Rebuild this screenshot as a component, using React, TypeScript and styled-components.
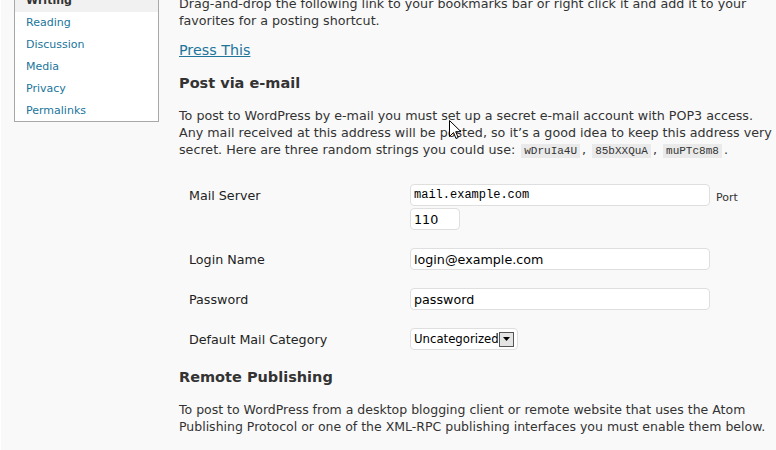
import styled, { createGlobalStyle } from 'styled-components';

const GlobalStyle = createGlobalStyle`
  html, body {
    margin: 0;
    padding: 0;
    background: #f9f9f9;
    overflow: hidden;
  }
  body {
    font-family: 'DejaVu Sans', Verdana, sans-serif;
    color: #333;
  }
`;

const Page = styled.div`
  position: relative;
  display: flex;
  align-items: flex-start;
  width: 776px;
  height: 450px;
  overflow: hidden;
  border-left: 1px solid #fff;
  box-sizing: border-box;
`;

const Sidebar = styled.ul`
  list-style: none;
  margin: -11px 0 0 13px;
  padding: 0;
  width: 143px;
  flex: none;
  background: #fff;
  border: 1px solid #a8a8a8;
`;

const SideItem = styled.li<{ $current?: boolean }>`
  height: 22px;
  line-height: 22px;
  padding-left: 11px;
  font-size: 11px;
  font-weight: ${(p) => (p.$current ? 'bold' : 'normal')};
  background: ${(p) => (p.$current ? '#f1f1f1' : 'transparent')};

  &:last-child {
    height: 21px;
  }

  a {
    color: ${(p) => (p.$current ? '#333' : '#21759b')};
    text-decoration: none;
  }
`;

const Main = styled.div`
  flex: 1;
  margin: -5px 0 0 20px;
  padding-right: 3px;
`;

const Text = styled.p<{ $gap?: number; $size?: number }>`
  margin: ${(p) => p.$gap ?? 0}px 0 0;
  font-size: ${(p) => p.$size ?? 12.7}px;
  line-height: 17px;
  color: #333;
`;

const PressLink = styled.a`
  display: inline-block;
  margin-top: 11px;
  font-size: 14.3px;
  line-height: 20px;
  color: #21759b;
  text-decoration: underline;
`;

const Heading = styled.h3<{ $gap: number }>`
  margin: ${(p) => p.$gap}px 0 0;
  font-size: 14.5px;
  line-height: 22px;
  font-weight: bold;
  color: #333;
`;

const Code = styled.code`
  font-family: 'Liberation Mono', 'Courier New', monospace;
  font-size: 11px;
  line-height: 13px;
  background: #eaeaea;
  padding: 1px 3px;
  margin: 0 2px;
`;

const FormTable = styled.div`
  display: grid;
  grid-template-columns: 231px 1fr;
  margin-top: 17px;
`;

const Label = styled.div`
  padding: 12px 10px 0;
  font-size: 12.7px;
  line-height: 17px;
  color: #222;
`;

const Field = styled.div`
  padding: 9px 0;
  display: flex;
  flex-wrap: wrap;
  align-items: center;
  column-gap: 6px;
`;

const Input = styled.input<{ $mono?: boolean; $w: number }>`
  box-sizing: border-box;
  width: ${(p) => p.$w}px;
  height: 22px;
  padding: 0 3px;
  border: 1px solid #dfdfdf;
  border-radius: 4px;
  background: #fff;
  outline: none;
  font-family: ${(p) =>
    p.$mono ? "'Liberation Mono', 'Courier New', monospace" : "'DejaVu Sans', Verdana, sans-serif"};
  font-size: ${(p) => (p.$mono ? '12px' : '12.7px')};
  color: #000;
`;

const PortLabel = styled.span`
  font-size: 11px;
  color: #333;
  padding-top: 5px;
`;

const PortRow = styled.div`
  flex-basis: 100%;
  margin-top: 2px;
`;

const Select = styled.div`
  box-sizing: border-box;
  width: 108px;
  height: 22px;
  padding: 2px 3px;
  display: flex;
  align-items: center;
  border: 1px solid #dfdfdf;
  border-radius: 4px;
  background: #fff;
  font-size: 11.7px;
  color: #000;
`;

const SelectText = styled.span`
  flex: 1;
  white-space: nowrap;
`;

const DropButton = styled.span`
  box-sizing: border-box;
  width: 16px;
  height: 15px;
  display: flex;
  align-items: center;
  justify-content: center;
  border: 1px solid #555;
  background: #e4e4e4;
`;

const Cursor = styled.svg`
  position: absolute;
  left: 448px;
  top: 120px;
`;

const App = () => {
  return (
    <>
      <GlobalStyle />
      <Page>
        <Sidebar>
          <SideItem $current>
            <a href="#">Writing</a>
          </SideItem>
          {['Reading', 'Discussion', 'Media', 'Privacy', 'Permalinks'].map((s) => (
            <SideItem key={s}>
              <a href="#">{s}</a>
            </SideItem>
          ))}
        </Sidebar>

        <Main>
          <Text>
            Drag-and-drop the following link to your bookmarks bar or right click it and add it to your
            favorites for a posting shortcut.
          </Text>
          <PressLink href="#">Press This</PressLink>

          <Heading $gap={12}>Post via e-mail</Heading>
          <Text $gap={13}>
            To post to WordPress by e-mail you must set up a secret e-mail account with POP3 access.
            Any mail received at this address will be posted, so it’s a good idea to keep this address very
            secret. Here are three random strings you could use: <Code>wDruIa4U</Code>, <Code>85bXXQuA</Code>,{' '}
            <Code>muPTc8m8</Code>.
          </Text>

          <FormTable>
            <Label>Mail Server</Label>
            <Field>
              <Input $mono $w={300} defaultValue="mail.example.com" />
              <PortLabel>Port</PortLabel>
              <PortRow>
                <Input $w={50} defaultValue="110" />
              </PortRow>
            </Field>

            <Label>Login Name</Label>
            <Field>
              <Input $w={300} defaultValue="login@example.com" />
            </Field>

            <Label>Password</Label>
            <Field>
              <Input $w={300} defaultValue="password" />
            </Field>

            <Label>Default Mail Category</Label>
            <Field>
              <Select>
                <SelectText>Uncategorized</SelectText>
                <DropButton>
                  <svg width="7" height="4" viewBox="0 0 7 4">
                    <path d="M0 0h7L3.5 4z" fill="#000" />
                  </svg>
                </DropButton>
              </Select>
            </Field>
          </FormTable>

          <Heading $gap={7}>Remote Publishing</Heading>
          <Text $gap={13} $size={12.5}>
            To post to WordPress from a desktop blogging client or remote website that uses the Atom
            Publishing Protocol or one of the XML-RPC publishing interfaces you must enable them below.
          </Text>
        </Main>

        <Cursor width="12" height="20" viewBox="0 0 12 20">
          <path d="M0.5 0.5v16l4-4 2.5 6 2.2-1-2.5-5.8h5.3z" fill="#fff" stroke="#000" strokeWidth="1" />
        </Cursor>
      </Page>
    </>
  );
};

export default App;
